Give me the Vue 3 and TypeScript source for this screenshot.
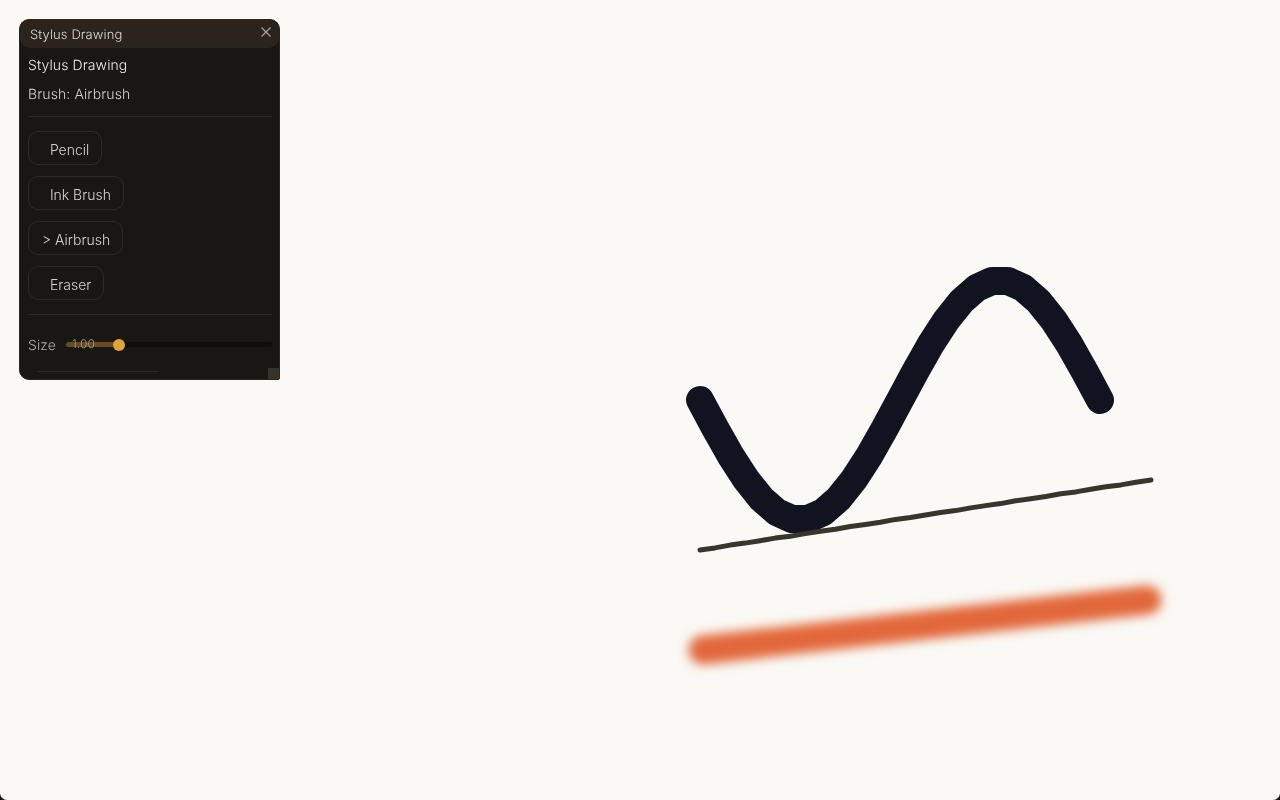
<script setup lang="ts">
const brushes = ['  Pencil', '  Ink Brush', '> Airbrush', '  Eraser']

const sinePoints: string[] = []
for (let i = 0; i <= 26; i++) {
  const x = 700 + (400 * i) / 26
  const y = 400 + 120 * Math.sin((2 * Math.PI * (x - 700)) / 400)
  sinePoints.push(`${x.toFixed(1)},${y.toFixed(1)}`)
}
const inkPoints = sinePoints.join(' ')

const pencilPoints: string[] = []
for (let i = 0; i <= 30; i++) {
  const t = i / 30
  const x = 700 + 451 * t
  const jitter = i === 0 || i === 30 ? 0 : 0.25 * Math.sin(i * 2.3)
  const y = 550 - 70 * t + jitter
  pencilPoints.push(`${x.toFixed(1)},${y.toFixed(1)}`)
}
const pencilLine = pencilPoints.join(' ')
</script>

<template>
  <main class="stage">
    <div class="paper">
      <svg class="canvas" width="1280" height="800" viewBox="0 0 1280 800" aria-hidden="true">
        <defs>
          <filter id="air" x="-10%" y="-200%" width="120%" height="500%">
            <feGaussianBlur stdDeviation="5.5" />
          </filter>
        </defs>
        <polyline :points="inkPoints" class="ink" />
        <polyline :points="pencilLine" class="pencil" />
        <path d="M703 650 L1147 600" class="air" filter="url(#air)" />
      </svg>
    </div>

    <section class="panel">
      <header class="titlebar">
        <span>Stylus Drawing</span>
        <svg class="close" width="12" height="12" viewBox="0 0 12 12" aria-hidden="true">
          <path d="M1.5 1.5 L10.5 10.5 M10.5 1.5 L1.5 10.5" />
        </svg>
      </header>
      <div class="body">
        <p class="heading">Stylus Drawing</p>
        <p class="current">Brush: Airbrush</p>
        <hr class="rule" />
        <div class="brushes">
          <button v-for="b in brushes" :key="b" class="brush" type="button">{{ b }}</button>
        </div>
        <hr class="rule second" />
        <div class="size">
          <span class="size-label">Size</span>
          <div class="slider">
            <div class="fill"></div>
            <div class="knob"></div>
            <span class="value">1.00</span>
          </div>
        </div>
        <hr class="cut" />
      </div>
      <div class="grip"></div>
    </section>
  </main>
</template>

<style scoped>
.stage {
  position: relative;
  width: 1280px;
  height: 800px;
  background: #14130f;
  overflow: hidden;
  font-family: Inter, "Liberation Sans", sans-serif;
  font-weight: 300;
  letter-spacing: 0.1px;
  text-rendering: geometricPrecision;
}
.paper {
  width: 100%;
  height: 100%;
  background: #faf9f5;
  border-radius: 0 0 7px 7px;
  overflow: hidden;
}
.canvas {
  display: block;
}
.ink,
.pencil,
.air {
  fill: none;
  stroke-linecap: round;
  stroke-linejoin: round;
}
.ink {
  stroke: #111420;
  stroke-width: 28px;
}
.pencil {
  stroke: #38352f;
  stroke-width: 5px;
}
.air {
  stroke: #e2673a;
  stroke-width: 29px;
}
.panel {
  position: absolute;
  left: 19px;
  top: 19px;
  width: 261px;
  height: 361px;
  box-sizing: border-box;
  background: #191714;
  border: 1px solid #2a2620;
  border-radius: 10px 10px 2px 10px;
  overflow: hidden;
  will-change: transform;
}
.titlebar {
  height: 28px;
  box-sizing: border-box;
  padding: 1px 7px 0 10px;
  display: flex;
  align-items: center;
  justify-content: space-between;
  background: #2a241d;
  border-radius: 10px;
  color: #dbd8d2;
  font-size: 13px;
}
.close {
  margin-top: -5px;
}
.close path {
  stroke: #a8a6a0;
  stroke-width: 1.2;
  fill: none;
}
.body {
  padding: 0 7px 0 8px;
}
.heading,
.current {
  margin: 0;
  font-size: 14px;
}
.heading {
  padding-top: 9px;
  line-height: 17px;
  color: #ecebe7;
}
.current {
  padding-top: 12px;
  line-height: 17px;
  color: #d5d3ce;
}
.rule {
  margin: 13px 0 0;
  border: 0;
  height: 1px;
  background: #312b23;
}
.rule.second {
  margin-top: 0;
}
.brushes {
  display: flex;
  flex-direction: column;
  align-items: flex-start;
  gap: 11px;
  padding: 14px 0;
}
.brush {
  height: 34px;
  box-sizing: border-box;
  padding: 2px 12px 0 13px;
  background: transparent;
  border: 1px solid #2e2b26;
  border-radius: 10px;
  color: #d5d3ce;
  font: inherit;
  font-size: 14px;
  letter-spacing: 0;
  white-space: pre;
}
.size {
  display: flex;
  align-items: center;
  gap: 10px;
  margin-top: 20px;
  height: 20px;
}
.size-label {
  flex: none;
  width: 28px;
  white-space: nowrap;
  font-size: 14px;
  color: #b0aea8;
}
.slider {
  position: relative;
  flex: 1;
  height: 5px;
  margin-top: -1px;
  border-radius: 3px;
  background: #0f0d0b;
}
.fill {
  width: 54px;
  height: 100%;
  border-radius: 3px;
  background: #674c20;
}
.knob {
  position: absolute;
  left: 47px;
  top: -3px;
  width: 12px;
  height: 12px;
  border-radius: 50%;
  background: #e0a33a;
}
.value {
  position: absolute;
  left: 6px;
  top: -6px;
  font-size: 12px;
  line-height: 16px;
  color: #a09b92;
}
.cut {
  margin: 16px 0 0 10px;
  width: 121px;
  border: 0;
  height: 1px;
  background: #312b23;
}
.grip {
  position: absolute;
  right: 0;
  bottom: 0;
  width: 11px;
  height: 11px;
  background: #38322a;
}
</style>
